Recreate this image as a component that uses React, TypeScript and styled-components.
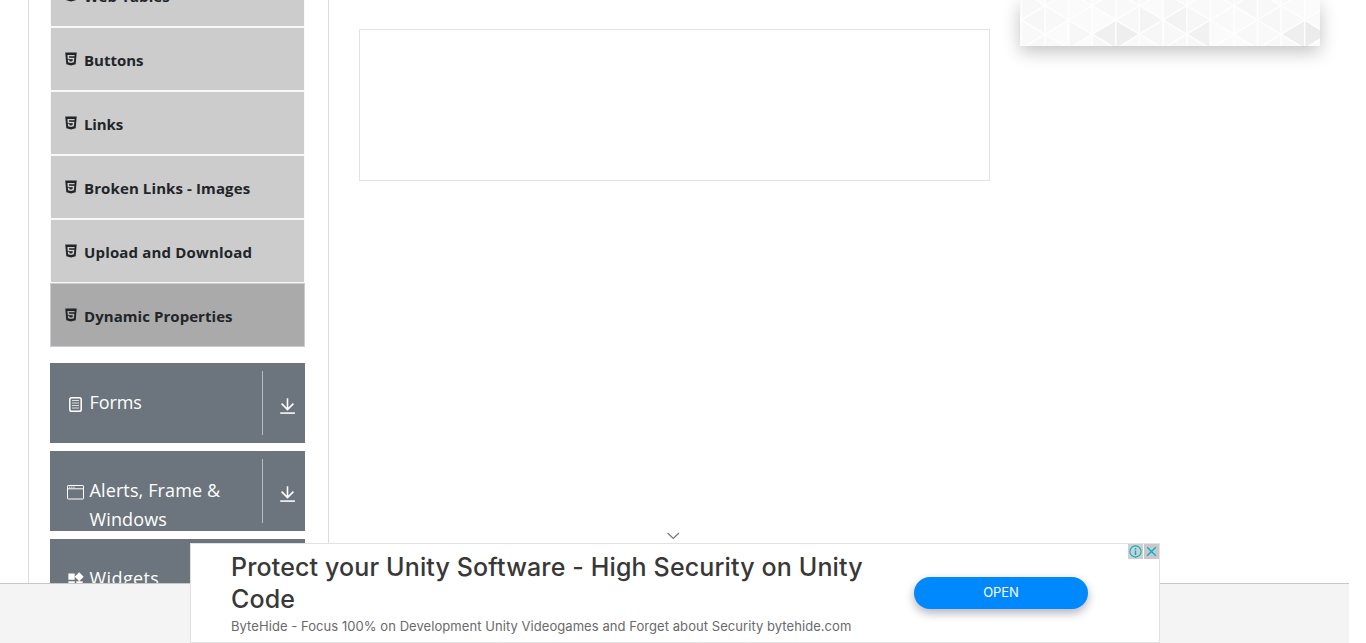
import React from 'react';
import styled, { createGlobalStyle } from 'styled-components';
import { AiFillHtml5 } from 'react-icons/ai';
import { MdWidgets } from 'react-icons/md';

const GlobalStyle = createGlobalStyle`
  * { box-sizing: border-box; }
  html, body { margin: 0; padding: 0; overflow: hidden; background: #fff; }
  body { font-family: "Open Sans", "Noto Sans", sans-serif; color: #212529; }
`;

const Page = styled.div`
  position: relative;
  display: flex;
  flex-direction: column;
  height: 643px;
  overflow: hidden;
`;

const Main = styled.main`
  display: flex;
  align-items: flex-start;
  height: 583px;
  overflow: hidden;
  padding-left: 28px;
`;

const Sidebar = styled.aside`
  width: 301px;
  height: 583px;
  padding: 0 23px 0 21px;
  border: solid #dcdcdc;
  border-width: 0 1px;
  flex: none;
`;

const MenuList = styled.ul`
  list-style: none;
  margin: -37px 0 16px;
  padding: 0;
`;

const MenuItem = styled.li<{ $active?: boolean }>`
  display: flex;
  align-items: center;
  height: 64px;
  padding-left: 12px;
  border: 1px solid ${(p) => (p.$active ? '#c9ccd2' : '#f8f8f9')};
  background: ${(p) => (p.$active ? '#aaaaaa' : '#cccccc')};
  font-size: 15px;
  font-weight: 700;
  line-height: 24px;

  svg { width: 16px; height: 16px; margin-right: 5px; }
`;

const ItemLabel = styled.span<{ $track: number }>`
  padding-top: 1px;
  letter-spacing: ${(p) => p.$track}px;
  white-space: nowrap;
`;

const Group = styled.div`
  display: flex;
  height: 80px;
  margin-bottom: 8px;
  background: #6c757d;
  color: #fff;
  overflow: hidden;
`;

const GroupIcon = styled.span`
  width: 39px;
  padding: 32px 0 0 16px;
  flex: none;
  svg { display: block; width: 19px; height: 19px; }
`;

const GroupTitle = styled.div<{ $track: number }>`
  width: 173px;
  padding: 25px 0 0 0.5px;
  font-size: 18px;
  line-height: 29px;
  letter-spacing: ${(p) => p.$track}px;
`;

const GroupToggle = styled.div`
  flex: 1;
  height: 64px;
  margin-top: 8px;
  border-left: 1px solid #b9bdc1;
  padding: 26px 0 0 17px;
  svg { display: block; }
`;

const Content = styled.section`
  width: 631px;
  height: 152px;
  margin: 29px 0 0 30px;
  border: 1px solid #e3e3e3;
  flex: none;
`;

const SideCard = styled.div`
  width: 300px;
  height: 46px;
  margin-left: 30px;
  background: #fff;
  box-shadow: 0 6px 18px rgba(0, 0, 0, 0.24);
  flex: none;
  svg { display: block; }
`;

const Footer = styled.footer`
  width: 1349px;
  height: 60px;
  border-top: 1px solid #c8c8c8;
  background: #f4f4f4;
`;

const AdDock = styled.div`
  position: absolute;
  left: 190px;
  bottom: 0;
  width: 970px;
`;

const Collapse = styled.div`
  height: 15px;
  padding: 4px 0 0 477px;
  svg { display: block; }
`;

const Ad = styled.div`
  display: flex;
  height: 100px;
  background: #fff;
  border: 1px solid #e2e2e2;
  font-family: Inter, sans-serif;
`;

const AdText = styled.div`
  width: 683px;
  padding: 7px 0 0 40px;
  flex: none;
`;

const AdTitle = styled.div`
  font-size: 25px;
  font-weight: 500;
  line-height: 32px;
  letter-spacing: 0.14px;
  color: #383838;
  white-space: nowrap;
`;

const AdDescription = styled.div`
  margin-top: 1px;
  font-size: 13px;
  line-height: 20px;
  color: #6a6a6a;
  letter-spacing: 0.06px;
  white-space: nowrap;
`;

const OpenButton = styled.button`
  width: 174px;
  height: 32px;
  margin: 33px 0 0 40px;
  padding: 0 0 2px;
  border: 0;
  border-radius: 16px;
  background: #0088ff;
  color: #fff;
  font: 400 13px/30px Inter, sans-serif;
  letter-spacing: -0.1px;
  box-shadow: 0 4px 10px rgba(20, 20, 50, 0.33);
  flex: none;
`;

const AdChoices = styled.div`
  display: flex;
  gap: 1px;
  margin-left: auto;
`;

const Choice = styled.span<{ $shade: string }>`
  width: 15px;
  height: 15px;
  background: ${(p) => p.$shade};
  svg { display: block; }
`;

const items = [
  { label: 'Web Tables', track: 0.1 },
  { label: 'Buttons', track: 0 },
  { label: 'Links', track: -0.1 },
  { label: 'Broken Links - Images', track: 0.11 },
  { label: 'Upload and Download', track: 0.17 },
  { label: 'Dynamic Properties', track: 0.06, active: true },
];

const FormIcon = () => (
  <svg viewBox="0 0 19 19" fill="none" stroke="#fff">
    <rect x="3.8" y="2.8" width="11.4" height="13.4" rx="1.8" strokeWidth="1.5" />
    <path d="M6 5.5h7M6 8h7M6 10.5h7M6 13h7" strokeWidth="1" opacity="0.75" />
  </svg>
);

const WindowIcon = () => (
  <svg viewBox="0 0 19 19" fill="none" stroke="#fff">
    <rect x="1.5" y="2.5" width="16" height="13.5" rx="0.6" />
    <path d="M1.5 5.8h16" />
    <path d="M3 4.2h1.2M5.2 4.2h1.2M7.4 4.2h1.2" />
  </svg>
);

const DownIcon = () => (
  <svg width="16" height="18" viewBox="0 0 16 18" fill="none" stroke="#fff" strokeWidth="1.6">
    <path d="M7.5 1.2v11M1.6 6.6l5.9 5.9 5.9-5.9" />
    <path d="M.2 16.1h14.7" strokeWidth="1.8" opacity="0.85" />
  </svg>
);

const groups = [
  { title: 'Forms', icon: <FormIcon />, track: -0.1 },
  { title: 'Alerts, Frame & Windows', icon: <WindowIcon />, track: 0.12 },
  { title: 'Widgets', icon: <MdWidgets />, track: 0.4 },
];

const STEP_X = 23.6;
const STEP_Y = 28.6;
const SHADES = ['#f8f8f8', '#fbfbfb', '#f9f9f9', '#f7f7f7', '#fafafa'];

// Darker triangles, keyed by column, direction and height of the tip.
const ACCENTS: Record<string, string> = {
  '3-l-34': '#f0f0f0',
  '4-r-34': '#eeeeee',
  '5-r-20': '#f4f4f4',
  '6-l-20': '#f3f3f3',
  '7-l-34': '#f1f1f1',
  '11-l-34': '#efefef',
  '12-r-34': '#ececec',
};

const columnTop = (col: number) => (col % 2 === 0 ? -8.6 : -22.9);

const TrianglePattern = () => {
  const shapes: React.ReactNode[] = [];
  for (let c = -1; c < 13; c++) {
    const x0 = 1.5 + c * STEP_X;
    const x1 = x0 + STEP_X;
    for (let k = -1; k < 3; k++) {
      (['r', 'l'] as const).forEach((dir, d) => {
        const base = dir === 'r' ? x0 : x1;
        const tip = dir === 'r' ? x1 : x0;
        const y = columnTop(dir === 'r' ? c : c + 1) + k * STEP_Y;
        const tipY = y + STEP_Y / 2;
        shapes.push(
          <polygon
            key={`${c}${dir}${k}`}
            points={`${base},${y} ${base},${y + STEP_Y} ${tip},${tipY}`}
            fill={ACCENTS[`${c}-${dir}-${Math.round(tipY)}`] ?? SHADES[(c * 3 + k * 2 + d + 10) % 5]}
            stroke="#fefefe"
            strokeWidth="1.3"
          />,
        );
      });
    }
  }
  return <svg width="300" height="46">{shapes}</svg>;
};

export default function App() {
  return (
    <Page>
      <GlobalStyle />
      <Main>
        <Sidebar>
          <MenuList>
            {items.map((item) => (
              <MenuItem key={item.label} $active={item.active}>
                <AiFillHtml5 />
                <ItemLabel $track={item.track}>{item.label}</ItemLabel>
              </MenuItem>
            ))}
          </MenuList>
          {groups.map((group) => (
            <Group key={group.title}>
              <GroupIcon>{group.icon}</GroupIcon>
              <GroupTitle $track={group.track}>{group.title}</GroupTitle>
              <GroupToggle><DownIcon /></GroupToggle>
            </Group>
          ))}
        </Sidebar>
        <Content />
        <SideCard><TrianglePattern /></SideCard>
      </Main>
      <Footer />
      <AdDock>
        <Collapse>
          <svg width="13" height="8" viewBox="0 0 13 8" fill="none" stroke="#757575" strokeWidth="1.2">
            <path d="M.6 1l5.7 5.4L12 1" />
          </svg>
        </Collapse>
        <Ad>
          <AdText>
            <AdTitle>Protect your Unity Software - High Security on Unity<br />Code</AdTitle>
            <AdDescription>ByteHide - Focus 100% on Development Unity Videogames and Forget about Security bytehide.com</AdDescription>
          </AdText>
          <OpenButton>OPEN</OpenButton>
          <AdChoices>
            <Choice $shade="#cfcfcf">
              <svg width="15" height="15" viewBox="0 0 15 15" fill="none" stroke="#00aecd">
                <circle cx="7.5" cy="7.5" r="5.6" strokeWidth="1.1" />
                <path d="M7.5 6.4v4.6M7.5 4v1.4" strokeWidth="1.5" />
              </svg>
            </Choice>
            <Choice $shade="#c8c8c8">
              <svg width="15" height="15" viewBox="0 0 15 15" fill="none" stroke="#00aecd" strokeWidth="1.3">
                <path d="M3.2 3.2l8.6 8.6M11.8 3.2l-8.6 8.6" />
              </svg>
            </Choice>
          </AdChoices>
        </Ad>
      </AdDock>
    </Page>
  );
}
